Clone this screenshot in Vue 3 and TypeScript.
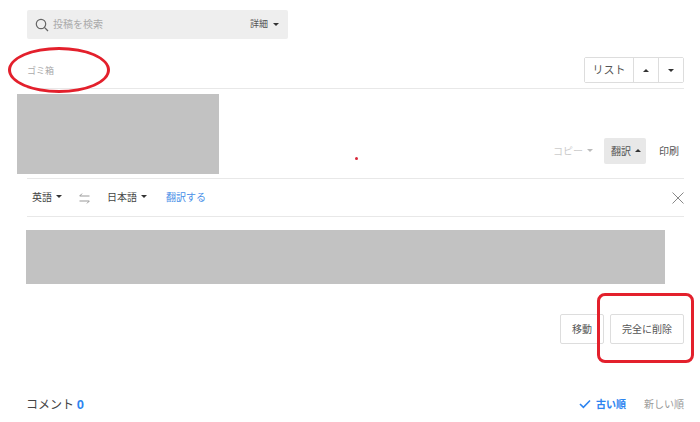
<script setup lang="ts">
const sortItems = ['新しい順'];
</script>

<template>
  <div class="page">
    <div class="search">
      <svg class="search__icon" width="14" height="14" viewBox="0 0 14 14">
        <circle cx="6" cy="6" r="4.7" fill="none" stroke="#666" stroke-width="1.2" />
        <path d="M9.4 9.4L13 13" stroke="#666" stroke-width="1.3" />
      </svg>
      <span class="search__text">投稿を検索</span>
      <span class="search__detail">詳細</span>
      <span class="caret"></span>
    </div>

    <div class="head">
      <span class="head__title">ゴミ箱</span>
      <div class="group">
        <button class="group__btn group__btn--text">リスト</button>
        <button class="group__btn"><span class="caret caret--up"></span></button>
        <button class="group__btn"><span class="caret"></span></button>
      </div>
    </div>

    <div class="post">
      <div class="post__image"></div>
      <div class="post__dot"></div>
      <div class="post__tools">
        <span class="tool tool--off">コピー<span class="caret caret--off"></span></span>
        <span class="tool tool--on">翻訳<span class="caret caret--up"></span></span>
        <span class="tool tool--print">印刷</span>
      </div>
    </div>

    <div class="translate">
      <span class="lang">英語<span class="caret"></span></span>
      <svg class="swap" width="11" height="11" viewBox="0 0 11 11">
        <path d="M3 .6L.7 3H10.5M8 10.4L10.3 8H.5" fill="none" stroke="#999" stroke-width="1" />
      </svg>
      <span class="lang">日本語<span class="caret"></span></span>
      <span class="translate__go">翻訳する</span>
      <svg class="close" width="12" height="12" viewBox="0 0 12 12">
        <path d="M.5.5L11.5 11.5M11.5.5L.5 11.5" stroke="#888" stroke-width="1" />
      </svg>
    </div>

    <div class="result"></div>

    <div class="actions">
      <button class="action">移動</button>
      <button class="action action--wide">完全に削除</button>
    </div>

    <div class="comments">
      <span class="comments__title">コメント <b>0</b></span>
      <div class="sort">
        <svg width="12" height="10" viewBox="0 0 12 10">
          <path d="M1 5L4.4 8.4L11 1.5" fill="none" stroke="#2d84f0" stroke-width="1.6" />
        </svg>
        <span class="sort__on">古い順</span>
        <span v-for="item in sortItems" :key="item" class="sort__off">{{ item }}</span>
      </div>
    </div>

    <div class="mark mark--ellipse"></div>
    <div class="mark mark--box"></div>
  </div>
</template>

<style>
html,
body {
  margin: 0;
  background: #fff;
}
</style>

<style scoped>
.page {
  position: relative;
  width: 700px;
  height: 422px;
  box-sizing: border-box;
  padding: 10px 16px 0 27px;
  overflow: hidden;
  font-family: "Noto Sans CJK JP", "Liberation Sans", sans-serif;
  font-size: 10px;
  color: #555;
}

.caret {
  display: inline-block;
  width: 0;
  height: 0;
  border-left: 3px solid transparent;
  border-right: 3px solid transparent;
  border-top: 3px solid #333;
}

.caret--up {
  border-top: 0;
  border-bottom: 3px solid #333;
}

.caret--off {
  border-top-color: #bbb;
}

.search {
  display: flex;
  align-items: center;
  width: 261px;
  height: 29px;
  box-sizing: border-box;
  padding: 0 9px 0 8px;
  background: #eee;
  border-radius: 2px;
}

.search__icon {
  margin-right: 4px;
}

.search__text {
  flex: 1;
  padding-bottom: 2px;
  font-size: 10px;
  color: #aaa;
}

.search__detail {
  margin-right: 5px;
  padding-bottom: 2px;
  font-size: 9px;
  color: #555;
}

.head {
  display: flex;
  align-items: flex-end;
  justify-content: space-between;
  height: 44px;
  padding-bottom: 5px;
  border-bottom: 1px solid #e8e8e8;
}

.head__title {
  margin-bottom: 6px;
  font-size: 9px;
  color: #aaa;
}

.group {
  display: flex;
  height: 26px;
  border: 1px solid #ddd;
  border-radius: 2px;
  box-sizing: border-box;
}

.group__btn {
  display: flex;
  align-items: center;
  justify-content: center;
  width: 25px;
  padding: 0;
  background: #fff;
  border: 0;
  border-left: 1px solid #ddd;
  font: inherit;
  color: #555;
}

.group__btn--text {
  width: 48px;
  padding-bottom: 3px;
  border-left: 0;
  font-size: 11px;
}

.post {
  position: relative;
  display: flex;
  align-items: flex-end;
  justify-content: space-between;
  height: 84px;
  padding-top: 5px;
  border-bottom: 1px solid #e8e8e8;
}

.post__image {
  width: 202px;
  height: 80px;
  margin: 0 0 4px -10px;
  background: #c2c2c2;
}

.post__dot {
  position: absolute;
  left: 328px;
  top: 68px;
  width: 3px;
  height: 3px;
  background: #d8283a;
  border-radius: 50%;
}

.post__tools {
  display: flex;
  align-items: center;
  height: 26px;
  margin-bottom: 14px;
}

.tool {
  display: flex;
  align-items: center;
  gap: 4px;
  height: 26px;
  padding-bottom: 2px;
  box-sizing: border-box;
  border-radius: 2px;
  color: #555;
}

.tool--off {
  margin-right: 11px;
  color: #ccc;
}

.tool--on {
  padding: 0 5px 2px 7px;
  background: #e8e8e8;
}

.tool--print {
  margin: 0 5px 0 13px;
}

.translate {
  display: flex;
  align-items: center;
  height: 37px;
  padding-left: 5px;
  border-bottom: 1px solid #e8e8e8;
}

.lang {
  display: flex;
  align-items: center;
  gap: 4px;
  padding-bottom: 2px;
  color: #444;
}

.swap {
  margin: 1px 17px 0 17px;
}

.translate__go {
  margin-left: 19px;
  padding-bottom: 2px;
  color: #4a90e8;
}

.close {
  margin-left: auto;
}

.result {
  width: 639px;
  height: 54px;
  margin: 13px 0 0 -1px;
  background: #c2c2c2;
}

.actions {
  display: flex;
  justify-content: flex-end;
  gap: 6px;
  margin-top: 30px;
}

.action {
  width: 44px;
  height: 30px;
  padding: 0 0 2px;
  background: #fff;
  border: 1px solid #ddd;
  border-radius: 2px;
  font: inherit;
  color: #555;
}

.action--wide {
  width: 74px;
}

.comments {
  display: flex;
  align-items: center;
  justify-content: space-between;
  margin-top: 51px;
}

.comments__title {
  margin-left: -1px;
  font-size: 12px;
  color: #444;
}

.comments__title b {
  color: #2d84f0;
  font-family: "Liberation Sans", sans-serif;
  font-size: 13px;
}

.sort {
  display: flex;
  align-items: center;
}

.sort__on {
  margin-left: 5px;
  font-weight: 700;
  font-size: 10px;
  color: #2d84f0;
}

.sort__off {
  margin-left: 18px;
  font-size: 10px;
  color: #999;
}

.mark {
  position: absolute;
  box-sizing: border-box;
}

.mark--ellipse {
  left: 8px;
  top: 47px;
  width: 102px;
  height: 46px;
  border: 3px solid #e3202c;
  border-radius: 50%;
}

.mark--box {
  left: 597px;
  top: 293px;
  width: 97px;
  height: 70px;
  border: 3px solid #e3202c;
  border-radius: 8px;
}
</style>
